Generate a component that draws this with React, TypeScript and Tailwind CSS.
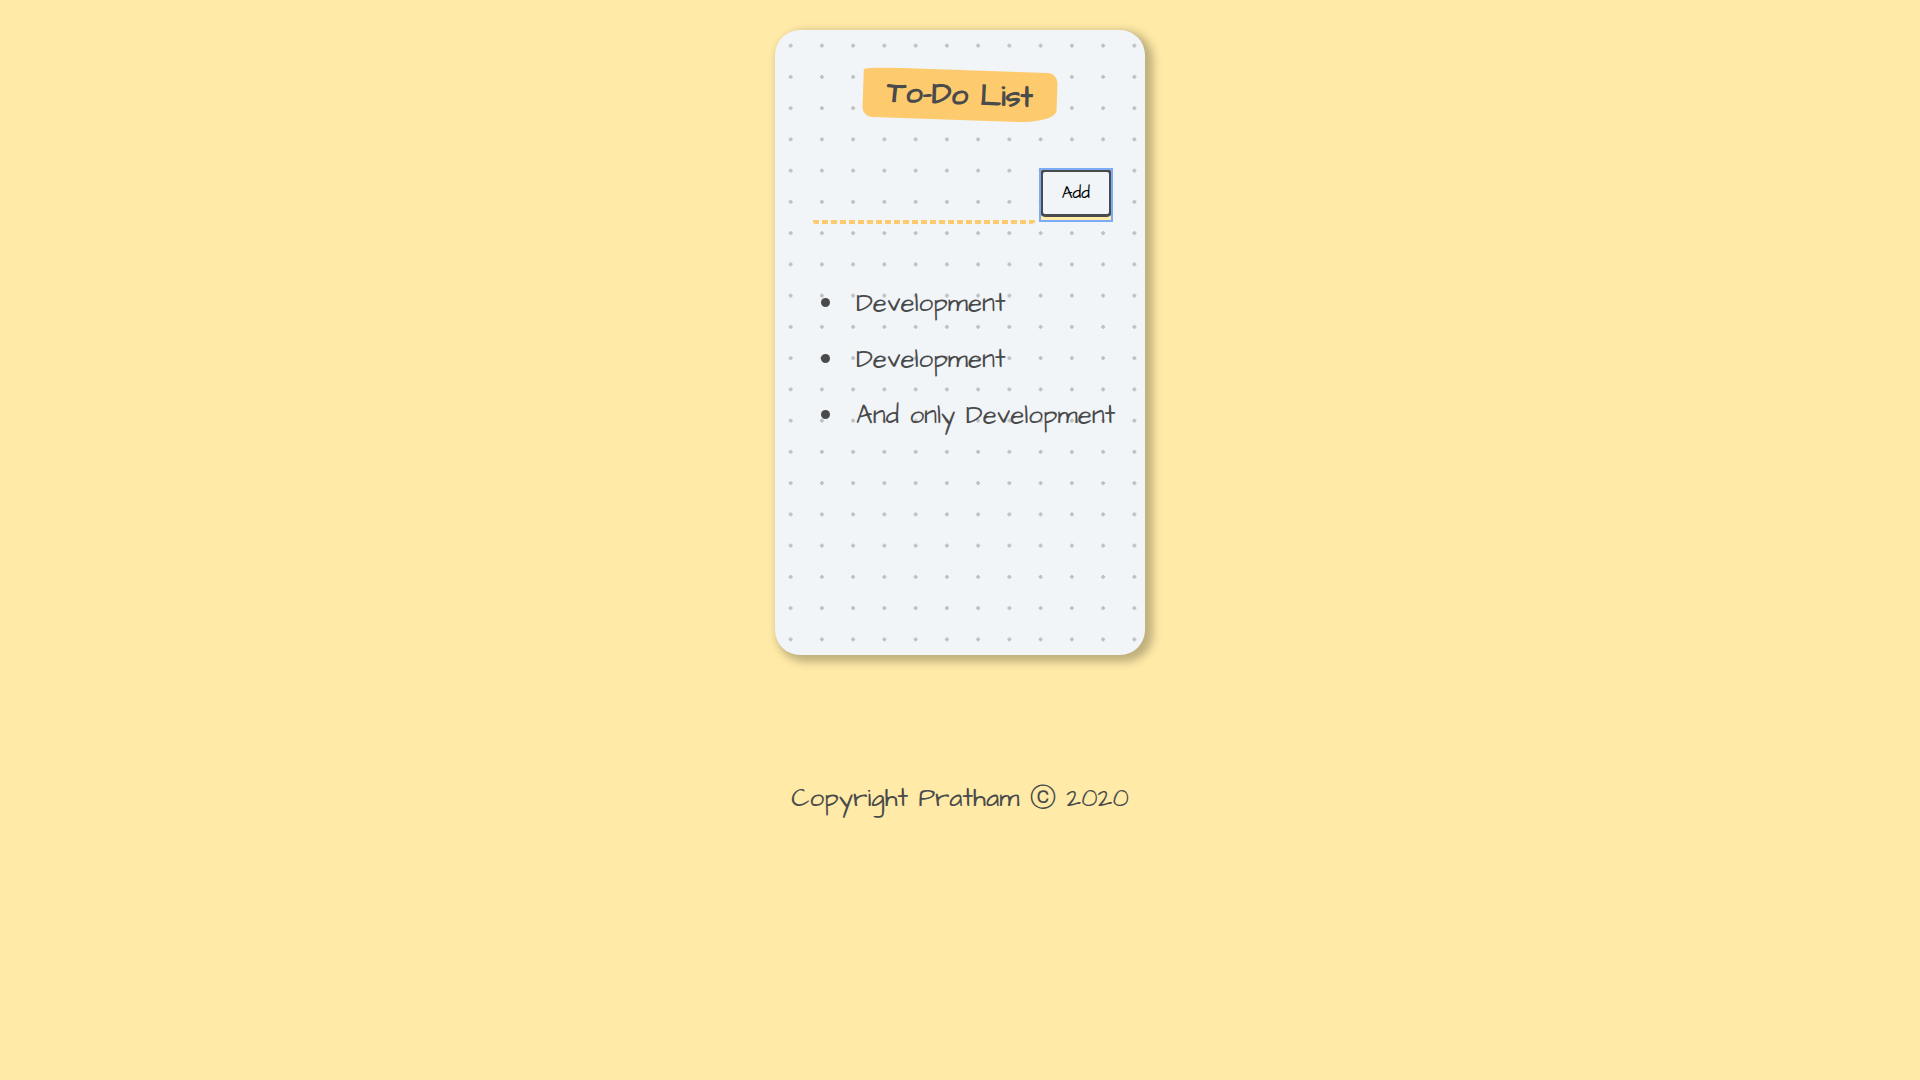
import { useState } from "react";

const initialItems = ["Development", "Development", "And only Development"];

export default function App() {
  const [text, setText] = useState("");
  const [items, setItems] = useState(initialItems);

  const addItem = (event: React.FormEvent) => {
    event.preventDefault();
    if (!text.trim()) return;
    setItems([...items, text]);
    setText("");
  };

  return (
    <div className="flex min-h-screen flex-col items-center bg-[#ffeaa7] px-5 pt-[30px] font-['Architects_Daughter',sans-serif] text-[26px] text-[#494a4b]">
      <main className="min-h-[625px] w-full max-w-[370px] rounded-[25px] bg-[#f1f5f8] bg-[radial-gradient(#bfc0c1_7.2%,transparent_0)] bg-[length:calc(125px/4)_calc(125px/4)] px-5 pt-10 shadow-[5px_4px_9px_3px_#00000040]">
        <header className="flex justify-center">
          <h1 className="rotate-2 rounded-[20%_5%_20%_5%/5%_20%_25%_20%] bg-[#fdcb6e] px-6 py-[5px] text-3xl leading-10 font-bold">
            To-Do List
          </h1>
        </header>

        <form onSubmit={addItem} className="mt-[49px] mr-[13px] ml-4 flex items-start">
          <input
            type="text"
            aria-label="New item"
            value={text}
            onChange={(event) => setText(event.target.value)}
            className="mr-[3px] h-[55px] min-w-0 flex-1 rounded-br-[8px_4px] rounded-bl-[4px_19px] bg-[repeating-linear-gradient(90deg,#fdcb6e_0_6px,transparent_6px_9px)] bg-[length:100%_4px] bg-[position:2px_100%] bg-no-repeat p-3.5 text-xl outline-none"
          />
          <button
            type="submit"
            className="cursor-pointer bg-[#ffeaa7] pb-1 text-[17px] text-black outline-2 -outline-offset-1 outline-[#7baaf7]"
          >
            <span className="block rounded-[5px] border-[3px] border-[#494a4b] bg-[#f1f5f8] px-[19px] py-[9px] leading-6">
              Add
            </span>
          </button>
        </form>

        <ul className="mt-[51px] list-disc pl-[50px]">
          {items.map((item, index) => (
            <li key={index} className="py-3 pl-[11px] leading-8 whitespace-nowrap">
              {item}
            </li>
          ))}
        </ul>
      </main>

      <footer className="py-[127px]">
        <p className="leading-8">Copyright Pratham ⓒ 2020</p>
      </footer>
    </div>
  );
}
